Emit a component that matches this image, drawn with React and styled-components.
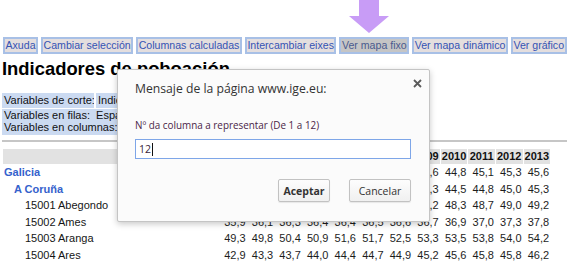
import React from 'react';
import styled, { createGlobalStyle } from 'styled-components';

const GlobalStyle = createGlobalStyle`
  html, body {
    margin: 0;
    padding: 0;
    overflow: hidden;
    background: #ffffff;
  }
  body {
    font-family: "Liberation Sans", Arial, sans-serif;
    font-size: 11px;
    color: #1a1a1a;
  }
`;

const Page = styled.div`
  position: relative;
  width: 567px;
  height: 265px;
  padding: 37px 0 0 3px;
  box-sizing: border-box;
  overflow: hidden;
`;

// Toolbar
const Toolbar = styled.div`
  display: flex;
  gap: 3px;
  white-space: nowrap;
`;

const ToolButton = styled.button`
  flex: none;
  height: 17px;
  margin: 0;
  padding: 0 0.5px;
  border: 2px solid #a8c0e6;
  background: ${(p) => (p.$active ? '#c5c5c5' : '#e4dede')};
  color: ${(p) => (p.$active ? '#4a5a8e' : '#3553b4')};
  font-family: "Liberation Sans", Arial, sans-serif;
  font-size: 10.6px;
  line-height: 13px;
  cursor: pointer;
`;

const Arrow = styled.svg`
  position: absolute;
  left: 349px;
  top: 0;
`;

const Title = styled.h1`
  margin: 4px 0 0 -1px;
  font-size: 18.4px;
  line-height: 21px;
  font-weight: bold;
  color: #000;
`;

// Cut variables block
const VarGrid = styled.div`
  display: grid;
  grid-template-columns: 92px 120px;
  gap: 1px 2px;
  margin: 14px 0 0 -1px;
`;

const VarCell = styled.div`
  background: #cbdaf1;
  padding: 0 2px;
  line-height: ${(p) => (p.$multi ? '12px' : '15px')};
  grid-column: ${(p) => (p.$multi ? 'span 2' : 'auto')};
  padding-bottom: ${(p) => (p.$multi ? '2px' : '0')};
  white-space: pre;
  overflow: hidden;
  color: #111;
`;

const Rule = styled.div`
  margin: 5px 0 0 -1px;
  border-top: 2px solid #c6c6c6;
`;

// Data table
const DataTable = styled.table`
  margin: 6px 0 0 -1px;
  border-collapse: separate;
  border-spacing: 1px;
  table-layout: fixed;
  font-size: 11px;
`;

const HeadCell = styled.th`
  height: 15px;
  padding: 0;
  background: #e2e2e2;
  font-weight: bold;
  text-align: center;
  color: #111;
  line-height: 15px;
`;

const LabelCell = styled.td`
  height: 15.5px;
  padding: 0 0 0 ${(p) => p.$indent}px;
  line-height: 15px;
  white-space: nowrap;
  font-weight: ${(p) => (p.$level < 2 ? 'bold' : 'normal')};
  color: ${(p) => (p.$level < 2 ? '#3562cc' : '#151515')};
`;

const NumCell = styled.td`
  padding: 0 1px 0 0;
  text-align: right;
  line-height: 15px;
  color: #1d1d1d;
`;

// Browser prompt dialog
const Dialog = styled.div`
  position: absolute;
  left: 117px;
  top: 69px;
  width: 313px;
  height: 153px;
  box-sizing: border-box;
  padding: 11px 18px 0 17px;
  background: #fbfbfb;
  border: 1px solid #c4c4c4;
  border-radius: 2px;
  box-shadow: 0 2px 6px rgba(0, 0, 0, 0.22);
  font-family: "Open Sans", "Noto Sans", sans-serif;
  display: flex;
  flex-direction: column;
`;

const Close = styled.svg`
  position: absolute;
  right: 7px;
  top: 9px;
`;

const DialogTitle = styled.div`
  font-size: 12.2px;
  line-height: 16px;
  color: #333;
`;

const Prompt = styled.div`
  margin-top: 22px;
  font-size: 9.9px;
  line-height: 13px;
  color: #4a2547;
`;

const PromptInput = styled.div`
  margin-top: 7px;
  height: 20px;
  box-sizing: border-box;
  border: 1px solid #7ea6e8;
  background: #fff;
  padding: 0 3px;
  display: flex;
  align-items: center;
  font-size: 10.5px;
  color: #3a1f3a;
`;

const Caret = styled.span`
  display: inline-block;
  width: 1px;
  height: 13px;
  margin-left: 1px;
  background: #111;
`;

const ButtonRow = styled.div`
  margin-top: 20px;
  display: flex;
  justify-content: flex-end;
  gap: 19px;
`;

const DialogButton = styled.button`
  width: ${(p) => p.$w}px;
  height: 23px;
  padding: 0;
  border: 1px solid #c2c2c2;
  border-radius: 2px;
  background: linear-gradient(#fdfdfd, #f0f0f0);
  box-shadow: 0 1px 1px rgba(0, 0, 0, 0.08);
  font-family: "Open Sans", "Noto Sans", sans-serif;
  font-size: 10.5px;
  font-weight: ${(p) => (p.$primary ? 'bold' : 'normal')};
  color: #333;
`;

const buttons = [
  'Axuda',
  'Cambiar selección',
  'Columnas calculadas',
  'Intercambiar eixes',
  'Ver mapa fixo',
  'Ver mapa dinámico',
  'Ver gráfico',
  'Exportar',
];

const years = Array.from({ length: 12 }, (_, i) => 2002 + i);

const rows = [
  { name: 'Galicia', level: 0, values: ['42,6', '42,9', '43,2', '43,5', '43,7', '44,0', '44,3', '44,6', '44,8', '45,1', '45,3', '45,6'] },
  { name: 'A Coruña', level: 1, values: ['42,5', '42,8', '43,0', '43,3', '43,5', '43,8', '44,0', '44,3', '44,5', '44,8', '45,0', '45,3'] },
  { name: '15001 Abegondo', level: 2, values: ['45,8', '46,1', '46,5', '46,8', '47,1', '47,5', '47,8', '48,2', '48,3', '48,7', '49,0', '49,2'] },
  { name: '15002 Ames', level: 2, values: ['35,9', '36,1', '36,3', '36,4', '36,4', '36,5', '36,6', '36,7', '36,9', '37,0', '37,3', '37,8'] },
  { name: '15003 Aranga', level: 2, values: ['49,3', '49,8', '50,4', '50,9', '51,6', '51,7', '52,5', '53,3', '53,5', '53,8', '54,0', '54,2'] },
  { name: '15004 Ares', level: 2, values: ['42,9', '43,3', '43,7', '44,0', '44,4', '44,7', '44,9', '45,2', '45,6', '45,8', '45,8', '46,2'] },
];

const indents = [1, 11, 22];

export default function App() {
  return (
    <Page>
      <GlobalStyle />
      <Toolbar>
        {buttons.map((b) => (
          <ToolButton key={b} $active={b === 'Ver mapa fixo'}>{b}</ToolButton>
        ))}
      </Toolbar>

      <Arrow width="40" height="34" viewBox="0 0 40 34">
        <polygon points="10,0 30,0 30,16 40,16 20,33 0,16 10,16" fill="#c89cf6" />
      </Arrow>

      <Title>Indicadores de poboación</Title>

      <VarGrid>
        <VarCell>Variables de corte:</VarCell>
        <VarCell>Indicadores</VarCell>
        <VarCell $multi>{'Variables en filas:  Espazo\nVariables en columnas:  Tempo'}</VarCell>
      </VarGrid>

      <Rule />

      <DataTable>
        <colgroup>
          <col style={{ width: 216 }} />
          {years.map((y) => (
            <col key={y} style={{ width: 26.6 }} />
          ))}
        </colgroup>
        <thead>
          <tr>
            <HeadCell />
            {years.map((y) => (
              <HeadCell key={y}>{y}</HeadCell>
            ))}
          </tr>
        </thead>
        <tbody>
          {rows.map((r) => (
            <tr key={r.name}>
              <LabelCell $level={r.level} $indent={indents[r.level]}>{r.name}</LabelCell>
              {r.values.map((v, i) => (
                <NumCell key={i}>{v}</NumCell>
              ))}
            </tr>
          ))}
        </tbody>
      </DataTable>

      <Dialog>
        <Close width="9" height="9" viewBox="0 0 9 9">
          <path d="M1 1 L8 8 M8 1 L1 8" stroke="#5a5a5a" strokeWidth="1.8" />
        </Close>
        <DialogTitle>Mensaje de la página www.ige.eu:</DialogTitle>
        <Prompt>Nº da columna a representar (De 1 a 12)</Prompt>
        <PromptInput>
          12<Caret />
        </PromptInput>
        <ButtonRow>
          <DialogButton $primary $w={52}>Aceptar</DialogButton>
          <DialogButton $w={62}>Cancelar</DialogButton>
        </ButtonRow>
      </Dialog>
    </Page>
  );
}
